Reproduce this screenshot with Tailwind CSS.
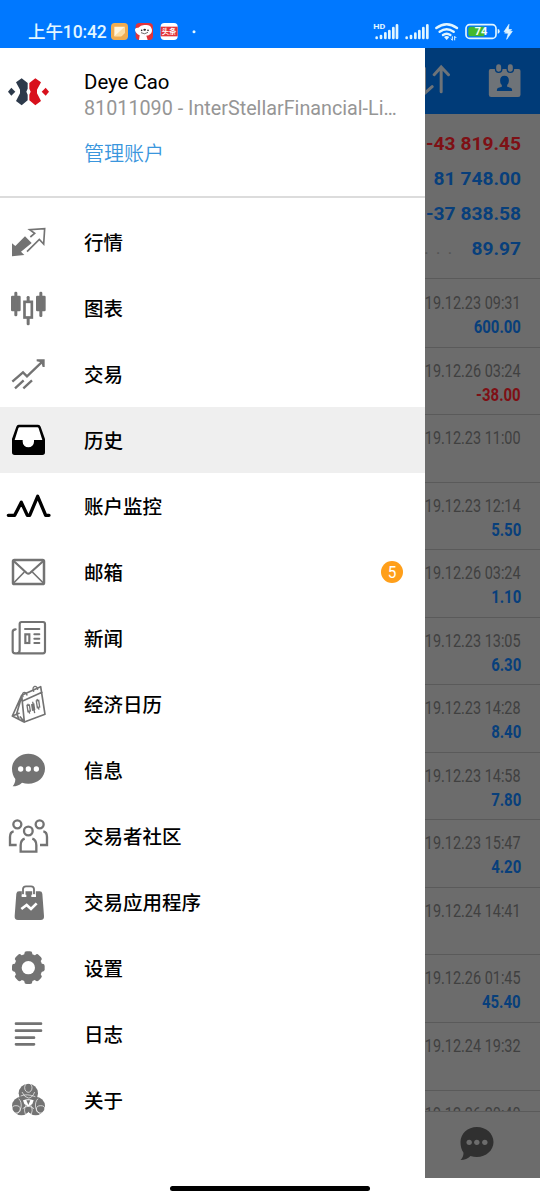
<!DOCTYPE html>
<html lang="zh-CN">
<head>
<meta charset="utf-8">
<title>历史</title>
<script src="https://cdn.jsdelivr.net/npm/@tailwindcss/browser@4"></script>
</head>
<body class="bg-white">
<div class="w-[540px] h-[1200px] flex flex-col overflow-hidden font-['Roboto','Noto_Sans_CJK_SC',sans-serif]">
  <!-- status bar -->
  <header class="h-12 shrink-0 bg-[#0078ff] flex text-[#e2f6ff]">
    <div class="pl-[28px] pt-[19px] flex h-12">
      <span class="w-[79px] text-[17.5px] leading-[26px] whitespace-nowrap font-medium tracking-[-0.1px]">上午10:42</span>
    </div>
    <svg class="w-[433px] h-12 shrink-0" viewBox="321 0 1299 144">
      <rect x="333" y="69" width="51" height="51" rx="11" fill="#f0ac50"/>
      <path d="M343 80h31v19l-10 10h-21z" fill="#fff4dc"/><path d="M374 80v19l-10 10h-21z" fill="#fbdca2"/>
      <rect x="407" y="69" width="52" height="51" rx="11" fill="#e0333b"/>
      <path d="M405 91q-1-9 10-8q8-10 22-8q14-1 17 9q5 10-2 17q-5 6-13 6l4 13h-26l2-14q-11-4-14-15z" fill="#fff"/>
      <circle cx="425" cy="91" r="2.500" fill="#222"/><circle cx="444" cy="91" r="2.500" fill="#222"/><ellipse cx="434" cy="89" rx="4" ry="3" fill="#222"/><path d="M423 98q11 7 21-1" fill="none" stroke="#222" stroke-width="2"/>
      <rect x="482" y="69" width="51" height="51" rx="11" fill="#fff"/><path d="M482 80h51v29h-51z" fill="#e53539"/>
      <text x="507" y="103" text-anchor="middle" font-size="22" font-weight="700" fill="#fff" font-family="Noto Sans CJK SC, sans-serif">头条</text>
      <circle cx="582" cy="95" r="4.500" fill="#e2f6ff"/>
      <text x="1120" y="88" font-size="23" font-weight="700" fill="#e2f6ff" font-family="Roboto, sans-serif" textLength="36" lengthAdjust="spacingAndGlyphs">HD</text>
      <g stroke="#e2f6ff" stroke-width="8" stroke-linecap="round" fill="none">
        <path d="M1130 113v1M1143 108v6M1156 100v14M1168 93v21M1180 84v30M1191 76v38"/>
        <path d="M1220 113v1M1233 108v6M1246 101v13M1258 93v21M1270 84v30M1282 76v38"/>
      </g>
      <g fill="none" stroke="#e2f6ff" stroke-width="7.500" stroke-linecap="round"><path d="M1309 84q31-23 62 0M1319 95q21-15 42 0M1329 105q11-8 22 0"/></g>
      <path d="M1332 111q8-6 16 0l-8 9z" fill="#e2f6ff"/>
      <path d="M1357 109v12M1364 121v-12M1353 116l4 5M1364 109l5 5" stroke="#e2f6ff" stroke-width="3" fill="none"/>
      <rect x="1398" y="74" width="90" height="41" rx="11" fill="none" stroke="#e2f6ff" stroke-width="5"/>
      <path d="M1413 80h40v29h-40q-8 0-8-8v-13q0-8 8-8z" fill="#43b92d"/>
      <path d="M1493 87q6 0 6 7t-6 7z" fill="#e2f6ff"/>
      <text x="1443" y="106" text-anchor="middle" font-size="33" font-weight="700" fill="#f4fff4" font-family="Roboto, sans-serif">74</text>
      <path d="M1527 73l-15 22h10l-8 4 11 1-5 18 17-24h-10l8-5-10-1z" fill="#e2f6ff" stroke="#e2f6ff" stroke-width="2"/>
    </svg>
  </header>

  <main class="h-[1130px] shrink-0 flex overflow-hidden">
    <!-- drawer -->
    <nav class="w-[424.5px] shrink-0 bg-white flex flex-col">
      <section class="h-[150px] border-b-2 border-[#dcdcdc] flex shrink-0">
        <svg class="w-[84px] h-[96px] shrink-0" viewBox="0 144 252 288">
          <g fill="#2d3a4b"><path d="M34 263l12 12-12 12-10-12z"/><path d="M48 247l17-12 18 14v17l-4 9 4 9v17l-18 15-17-13 12-23v-11z"/></g>
          <g fill="#d8101c"><path d="M137 263l10 12-10 12-12-12z"/><path d="M123 247l-17-12-18 14v17l4 9-4 9v17l18 15 17-13-12-23v-11z"/></g>
        </svg>
        <div class="flex flex-col pt-[21px] w-[330px] shrink-0">
          <div class="text-[20.4px] leading-[26px] text-black">Deye Cao</div>
          <div class="mt-px text-[19.75px] leading-[26px] text-[#969696] whitespace-nowrap">81011090 - InterStellarFinancial-Li…</div>
          <div class="mt-[18px] text-[20px] leading-[29px] text-[#3a96dd] font-[350]">管理账户</div>
        </div>
      </section>
      <ul class="pt-[11px] text-[19.5px] font-medium text-black *:h-[66px] *:flex *:items-center [&_b]:font-medium [&_b]:pt-[3px] [&_svg]:w-[60px] [&_svg]:h-[66px] [&_svg]:mr-6 [&_svg]:shrink-0 [&_svg]:text-[#737373]">
        <li><svg viewBox="0 -3 180 198"><path d="M36 139V100l10 8 29-29 20 20-32 26 10 10z" fill="currentColor"/><path d="M91 81l13-11-15-11 45-3-3 46-13-14-37 37" fill="none" stroke="currentColor" stroke-width="5"/></svg><b>行情</b></li>
        <li><svg viewBox="0 195 180 198"><g fill="currentColor"><rect x="33" y="257" width="29" height="47" rx="4"/><rect x="43" y="245" width="9" height="74" rx="4"/><rect x="108" y="257" width="29" height="47" rx="4"/><rect x="118" y="245" width="9" height="76" rx="4"/><rect x="80" y="258" width="9" height="18" rx="4"/><rect x="80" y="320" width="9" height="26" rx="4"/></g><rect x="73.500" y="275.500" width="22" height="47" fill="none" stroke="currentColor" stroke-width="8"/></svg><b>图表</b></li>
        <li><svg viewBox="0 393 180 198"><path d="M37 515l32-28 12 12 46-44M45 535l26-24M70 535l26-24" fill="none" stroke="currentColor" stroke-width="7"/><path d="M110 448h24v23h-6l-3-10-5-5-10-2z" fill="currentColor"/></svg><b>交易</b></li>
        <li class="bg-[#efefef]"><svg viewBox="0 -9 180 198"><path d="M57 48h56l15 42h-26v5a17 17 0 0 1-34 0v-5H42z" fill="#fff"/><path fill="#000" fill-rule="evenodd" d="M56 44h58q6 0 8 6l13 37v40q0 8-8 8H44q-8 0-8-8V87l13-37q2-6 7-6zM59 52q-3 0-4 3L44 90h24v5a17 17 0 0 0 34 0v-5h25L116 55q-1-3-4-3z"/></svg><b>历史</b></li>
        <li><svg viewBox="0 189 180 198"><path d="M25 316h19l20-39 18 39h7l24-57 24 57h10" fill="none" stroke="#000" stroke-width="10" stroke-linecap="round" stroke-linejoin="round"/></svg><b>账户监控</b></li>
        <li><svg viewBox="0 387 180 198"><g fill="none" stroke="currentColor"><rect x="39" y="450" width="93" height="72" rx="4" stroke-width="7.500"/><path d="M41 453l39 36q5 4 10 0l40-36" stroke-width="6.500"/><path d="M41 519l32-33M130 519l-33-33" stroke-width="5"/></g></svg><b>邮箱</b><span class="ml-auto mr-[22px] size-[22px] rounded-full bg-[#ff9f1a] text-white text-[17px] leading-[23px] font-normal text-center"><i class="block not-italic scale-x-90">5</i></span></li>
        <li><svg viewBox="0 15 180 198"><g fill="none" stroke="currentColor" stroke-width="6.500" stroke-linecap="round"><path d="M47 88q-9 0-9 8v56q0 8 8 8h83q6 0 6-6V72q0-6-6-6H65q-6 0-6 6v78q0 10-9 10"/><path d="M75 87h43M103 103h15M103 116h15M103 129h15" stroke-width="6"/><rect x="76" y="103" width="12" height="26" stroke-width="6.500" stroke-linecap="butt"/></g></svg><b>新闻</b></li>
        <li><svg viewBox="0 213 180 198"><g fill="none" stroke="currentColor" stroke-width="5" stroke-linejoin="round" stroke-linecap="round"><path d="M65 286l57-26 13 83-62 23zM65 286l-28 62 35 18M66 286L50 341l7 16M68 303l58-26M37 348l20-8M73 366l-12-15"/><path d="M69 290q-4-12 4-13q6 0 8 8M101 274q-5-12 3-15q7-1 9 9" stroke-width="4"/></g><g fill="none" stroke="currentColor" stroke-width="4"><path d="M81 316l7-1 3 18-7 2zM83 311l2 5M87 334l2 7M109 303l7-2 3 20-7 2zM111 297l1 5M115 322l2 7"/></g><path d="M93 313l10-3 3 20-10 3zM96 305l4 0 6 34-4 1z" fill="currentColor"/></svg><b>经济日历</b></li>
        <li><svg viewBox="0 411 180 198"><path d="M85 461c28 0 50 20 50 45s-22 45-50 45c-6 0-13-1-19-3-8 8-17 11-28 11 5-6 8-13 8-22-6-8-10-18-10-31 0-25 22-45 49-45z" fill="currentColor"/><g fill="#fff"><circle cx="62" cy="507" r="8"/><circle cx="85" cy="507" r="8"/><circle cx="109" cy="507" r="8"/></g></svg><b>信息</b></li>
        <li><svg viewBox="0 9 180 198"><g fill="none" stroke="currentColor" stroke-width="7"><circle cx="52" cy="73" r="12"/><circle cx="119" cy="73" r="12"/><circle cx="85" cy="93" r="13"/><path d="M41 94q-11 2-11 17v24h20M130 94q11 2 11 17v24h-21M74 116q-12 4-12 20v19h47v-19q0-16-12-20"/></g></svg><b>交易者社区</b></li>
        <li><svg viewBox="0 207 180 198"><path d="M49 281q1-7 8-7h62q7 0 8 7l5 67q1 12-10 12H54q-11 0-10-12z" fill="currentColor"/><g fill="none"><path d="M71 287v-18q0-11 8-11h15q8 0 8 11v18" stroke="#fff" stroke-width="11"/><path d="M69 283v-15q0-9 9-9h15q9 0 9 9v15" stroke="currentColor" stroke-width="5.500"/><path d="M64 327l16-12 13 12 17-17" stroke="#fff" stroke-width="8"/></g><path d="M65 284h14v7H65zM94 284h14v7H94z" fill="#fff"/></svg><b>交易应用程序</b></li>
        <li><svg viewBox="0 405 180 198"><g fill="currentColor"><circle cx="85" cy="503" r="42"/><rect x="73" y="454" width="24" height="98" rx="7"/><rect x="73" y="454" width="24" height="98" rx="7" transform="rotate(45 85 503)"/><rect x="73" y="454" width="24" height="98" rx="7" transform="rotate(90 85 503)"/><rect x="73" y="454" width="24" height="98" rx="7" transform="rotate(135 85 503)"/></g><circle cx="85" cy="503" r="20" fill="#fff"/></svg><b>设置</b></li>
        <li><svg viewBox="0 33 180 198"><path d="M48 101h75M48 122h75M48 143h54M48 163h54" stroke="currentColor" stroke-width="8" stroke-linecap="round"/></svg><b>日志</b></li>
        <li><svg viewBox="0 231 180 198"><g fill="currentColor"><circle cx="85" cy="310" r="29"/><circle cx="64" cy="348" r="28"/><circle cx="107" cy="348" r="28"/></g><g fill="none" stroke="#fff" stroke-width="2"><ellipse cx="85" cy="293" rx="11" ry="14"/><ellipse cx="48" cy="358" rx="13" ry="11"/><ellipse cx="122" cy="358" rx="13" ry="11"/><path d="M66 306q8 17 19 18t19-18M62 318q18-8 44 2M56 326q10 10 7 27q-2 10-12 18M114 326q-10 10-7 27q2 10 12 18M68 356q17-14 34 0M76 372q-8-20 9-34q17 14 9 34"/></g><path d="M69 331q16-7 32 0l-4 11-12 8-12-8z" fill="#fff"/><path d="M79 331h12l-6 14z" fill="currentColor"/></svg><b>关于</b></li>
      </ul>
    </nav>

    <!-- dimmed history page -->
    <aside class="w-[115.5px] shrink-0 bg-[#6c6c6c] flex flex-col overflow-hidden">
      <svg class="w-[115.5px] h-[66px] shrink-0 bg-[#003b78]" viewBox="463.5 144 346.5 198">
        <g fill="none" stroke="#6e7378" stroke-width="9" stroke-linecap="round"><path d="M462 205v75l23-20M512 275v-72M491 224l21-23 22 23"/></g>
        <path d="M660 207h84q6 0 6 6v71q0 7-7 7h-81q-7 0-7-7v-71q0-6 5-6z" fill="#6e7378"/>
        <g fill="#6e7378" stroke="#003b78" stroke-width="4"><rect x="675" y="191" width="19" height="26" rx="9"/><rect x="710" y="191" width="19" height="26" rx="9"/></g>
        <path d="M702 227c10 0 14 7 13 16 0 6-3 9-5 12v5l12 4q3 2 3 9h-46q0-7 3-9l12-4v-5c-3-3-5-6-5-12-1-9 3-16 13-16z" fill="#003b78"/>
      </svg>
      <section class="h-[165px] shrink-0 pt-[13px] pr-[19px] border-b border-[#5a5a5a] text-[19.2px] font-bold text-[#083f7b] *:h-[35px] *:flex *:items-center *:justify-end *:whitespace-nowrap">
        <div class="text-[#7e1015]">-43 819.45</div>
        <div>81 748.00</div>
        <div>-37 838.58</div>
        <div><span class="mr-auto text-[13px] tracking-[8px] text-[#555]">...</span>89.97</div>
      </section>
      <section id="deals" class="h-[832px] pt-px overflow-hidden shrink-0"></section>
      <footer class="grow border-t border-[#5a5a5a]">
        <svg class="w-[115.5px] h-[66px]" viewBox="73.5 456 346.5 198"><path d="M229 501c28 0 50 20 50 45s-22 45-50 45c-6 0-13-1-19-3-8 8-17 12-30 12 6-6 9-13 9-22-6-8-9-18-9-32 0-25 22-45 49-45z" fill="#303030"/><g fill="#6c6c6c"><circle cx="206" cy="547" r="8"/><circle cx="229" cy="547" r="8"/><circle cx="253" cy="547" r="8"/></g></svg>
      </footer>
    </aside>
  </main>
  <footer class="grow bg-white flex justify-center pt-[8px]"><div class="w-[200px] h-[5px] rounded-full bg-black"></div></footer>
</div>
<script>
const deals = [['12.23 09:31','600.00'],['12.26 03:24','-38.00'],['12.23 11:00',''],['12.23 12:14','5.50'],['12.26 03:24','1.10'],['12.23 13:05','6.30'],['12.23 14:28','8.40'],['12.23 14:58','7.80'],['12.23 15:47','4.20'],['12.24 14:41',''],['12.26 01:45','45.40'],['12.24 19:32',''],['12.26 20:40','']];
document.getElementById('deals').innerHTML = deals.map(([d, v]) => `
  <div class="h-[67.55px] pt-[11px] pr-[19px] border-b border-[#5a5a5a] flex flex-col items-end overflow-hidden">
    <div class="h-[24px] leading-[24px] text-[18.5px] text-[#404040] whitespace-nowrap origin-right scale-x-[.78]">2019.${d}</div>
    <div class="h-[24px] leading-[24px] text-[18px] font-bold whitespace-nowrap origin-right scale-x-[.83] ${v[0] === '-' ? 'text-[#7e1015]' : 'text-[#083f7b]'}">${v}</div>
  </div>`).join('');
</script>
</body>
</html>
